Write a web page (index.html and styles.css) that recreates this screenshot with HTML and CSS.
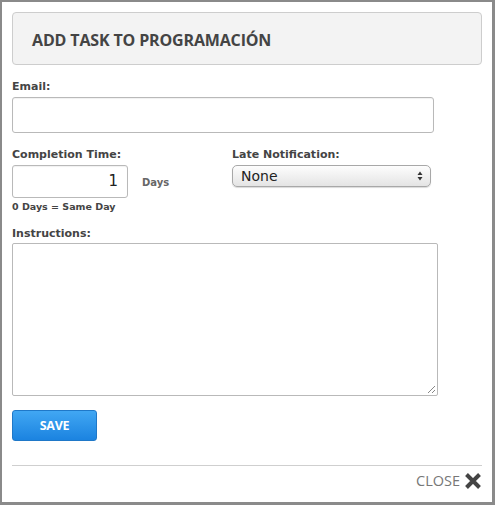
FILE: index.html
```html
<!DOCTYPE html>
<html>
<head>
<meta charset="utf-8">
<link rel="stylesheet" href="styles.css">
</head>
<body>
<div class="frame">
  <div class="header"><h1 class="title">ADD TASK TO PROGRAMACIÓN</h1></div>

  <div class="field">
    <label class="label">Email:</label>
    <div class="input email"></div>
  </div>

  <div class="row">
    <div class="col-left">
      <label class="label">Completion Time:</label>
      <div class="time-row">
        <div class="input time">1</div>
        <span class="unit">Days</span>
      </div>
      <div class="hint">0 Days = Same Day</div>
    </div>
    <div class="col-right">
      <label class="label">Late Notification:</label>
      <div class="select">
        <span class="select-text">None</span>
        <svg class="arrows" width="8" height="12" viewBox="0 0 8 12">
          <path d="M4 1.5 L6.5 5 L1.5 5 Z" fill="#333"/>
          <path d="M4 10.5 L6.5 7 L1.5 7 Z" fill="#333"/>
        </svg>
      </div>
    </div>
  </div>

  <div class="field instructions">
    <label class="label">Instructions:</label>
    <div class="textarea">
      <svg class="grip" width="10" height="10" viewBox="0 0 10 10">
        <path d="M9 2 L2 9 M9 6 L6 9" stroke="#888" stroke-width="1"/>
      </svg>
    </div>
  </div>

  <button class="save">SAVE</button>

  <div class="footer">
    <span class="close-text">CLOSE</span>
    <svg class="close-x" width="18" height="18" viewBox="0 0 18 18">
      <path d="M2.5 2.5 L15.5 15.5 M15.5 2.5 L2.5 15.5" stroke="#444" stroke-width="4"/>
    </svg>
  </div>
</div>
</body>
</html>
```

FILE: styles.css
```css
* { box-sizing: border-box; }
html, body { margin: 0; padding: 0; background: #8a8a8a; }
.frame {
  width: 490px;
  height: 500px;
  margin: 2px 3px 3px 2px;
  background: #fff;
  padding: 10px 10px 0 10px;
  font-family: "DejaVu Sans", sans-serif;
  color: #444;
}
.header {
  height: 53px;
  background: #f3f3f3;
  border: 1px solid #cdcdcd;
  border-radius: 4px;
  display: flex;
  align-items: center;
  padding-left: 19px;
}
.title {
  margin: 0;
  font-family: "Open Sans", sans-serif;
  font-weight: 700;
  font-size: 16px;
  letter-spacing: -0.15px;
  color: #444;
  padding-top: 2px;
}
.label {
  display: block;
  font-weight: bold;
  font-size: 11px;
  color: #444;
  line-height: 13px;
  margin-bottom: 4px;
}
.field { margin-top: 15px; }
.input {
  border: 1px solid #b9b9b9;
  border-radius: 3px;
  background: #fff;
  box-shadow: inset 0 1px 1px rgba(0,0,0,0.06);
}
.email { width: 422px; height: 36px; }
.row { display: flex; margin-top: 15px; }
.col-left { width: 220px; }
.col-right { width: 200px; }
.time-row { display: flex; align-items: center; }
.time {
  width: 116px;
  height: 33px;
  text-align: right;
  padding-right: 9px;
  font-size: 15px;
  line-height: 31px;
  color: #222;
}
.unit {
  font-weight: bold;
  font-size: 10px;
  color: #666;
  margin-left: 14px;
  padding-top: 2px;
}
.hint {
  font-weight: bold;
  font-size: 9.5px;
  color: #444;
  margin-top: 3px;
}
.select {
  width: 199px;
  height: 22px;
  border: 1px solid #a8a8a8;
  border-radius: 5px;
  background: linear-gradient(#fdfdfd, #e4e4e4);
  display: flex;
  align-items: center;
  justify-content: space-between;
  padding: 0 6px 0 8px;
  box-shadow: 0 1px 1px rgba(0,0,0,0.15);
}
.select-text { font-size: 14px; color: #222; }
.row + .instructions { margin-top: 15px; }
.instructions .label { margin-bottom: 3px; }
.textarea {
  position: relative;
  width: 426px;
  height: 153px;
  border: 1px solid #b9b9b9;
  border-radius: 2px;
}
.grip { position: absolute; right: 1px; bottom: 1px; }
.save {
  display: block;
  margin-top: 14px;
  width: 85px;
  height: 31px;
  border: 1px solid #1f78c8;
  border-radius: 3px;
  background: linear-gradient(#41a7f3, #1b83e0);
  color: #fff;
  font-family: "Open Sans", sans-serif;
  font-weight: 700;
  font-size: 12.5px;
  letter-spacing: -0.3px;
  padding: 0;
}
.footer {
  margin-top: 24px;
  border-top: 1px solid #cfcfcf;
  display: flex;
  justify-content: flex-end;
  align-items: center;
  padding-top: 5px;
  gap: 4px;
}
.close-text {
  font-family: "Open Sans", sans-serif;
  font-size: 14.5px;
  color: #777;
}
```
